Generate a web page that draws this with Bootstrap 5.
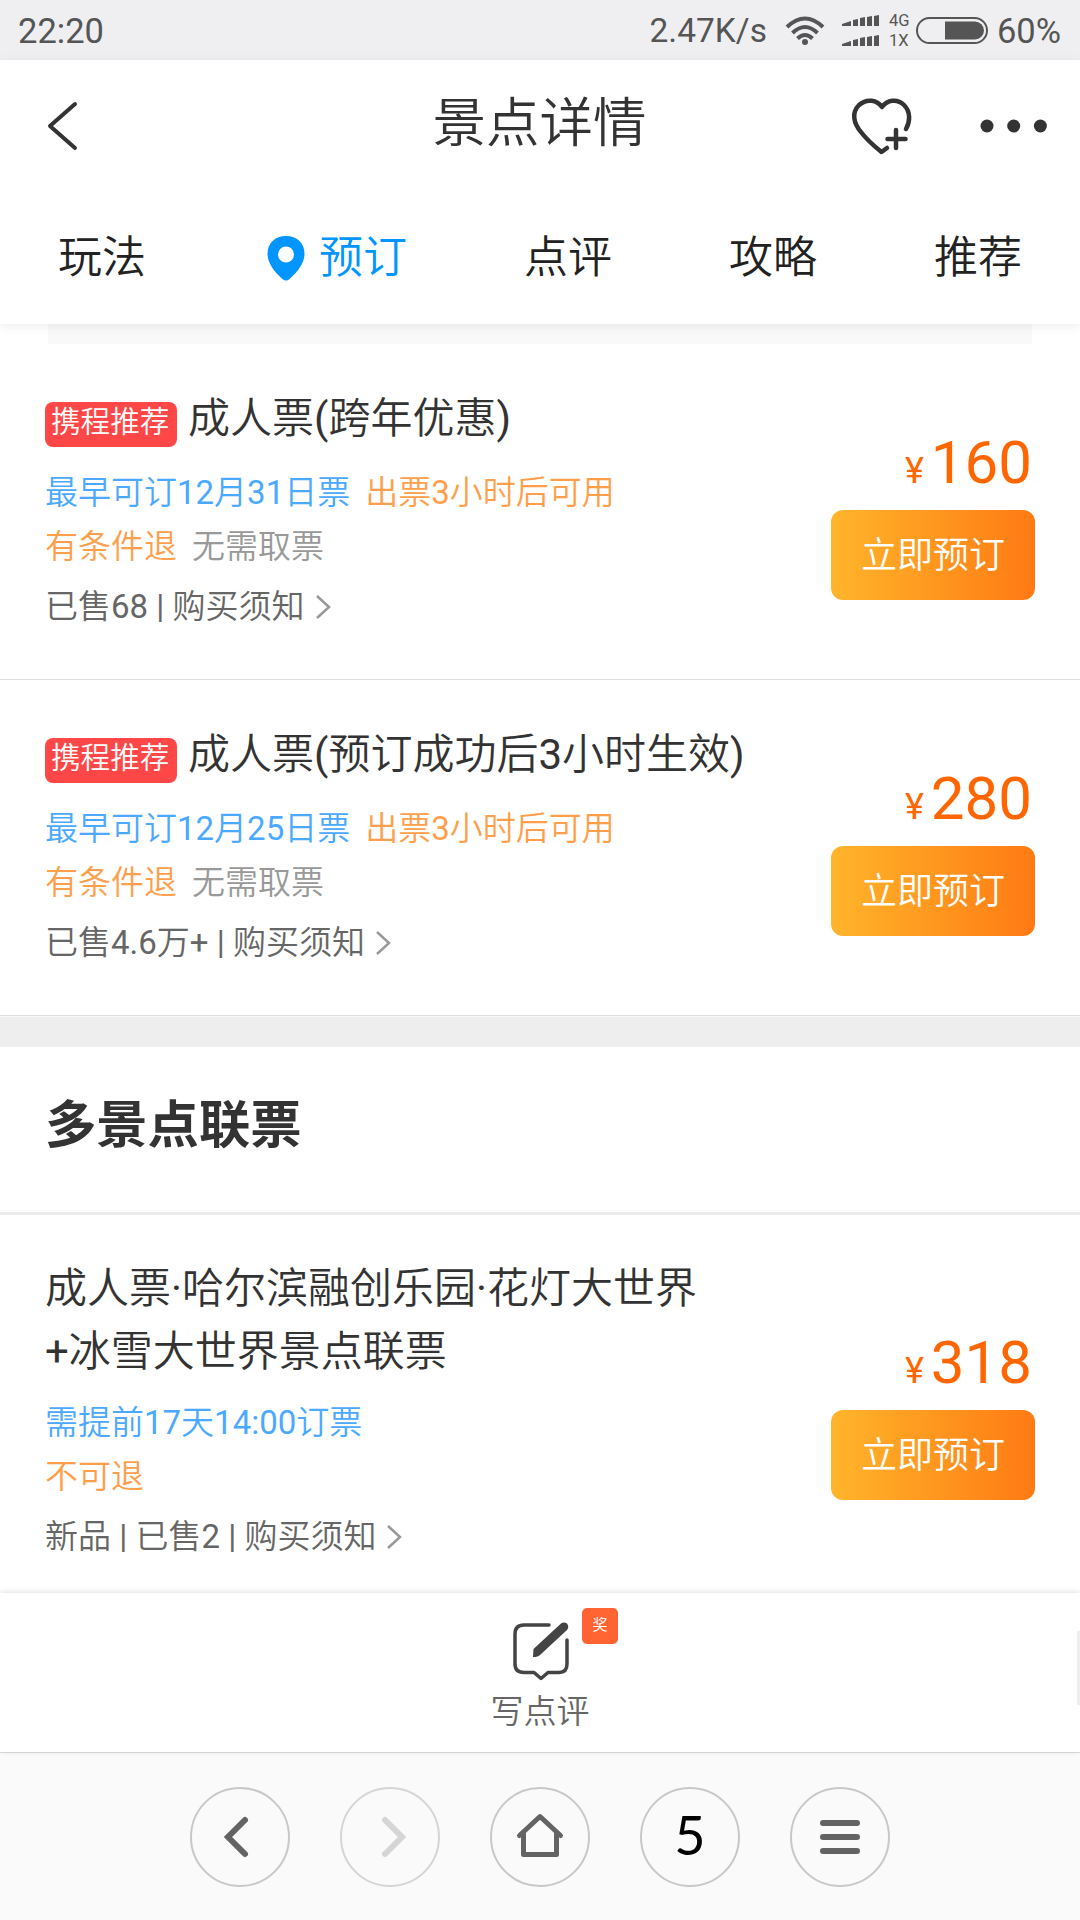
<!DOCTYPE html>
<html lang="zh-CN">
<head>
<meta charset="utf-8">
<meta name="viewport" content="width=device-width, initial-scale=1">
<title>景点详情</title>
<link href="https://cdn.jsdelivr.net/npm/bootstrap@5.3.0/dist/css/bootstrap.min.css" rel="stylesheet">
<style>
  body { font-family: Roboto, "Noto Sans CJK SC DemiLight", "Noto Sans CJK SC", sans-serif; color: #333; background: #fff; }
  svg { display: block; flex: none; }
  .screen { width: 1080px; height: 1920px; }
  .statusbar { height: 60px; background: #efeff1; color: #555; font-size: 34.5px; line-height: 60px; padding: 1px 19px 0 18px; }
  .net-speed { font-size: 33.5px; }
  .net-label { font-size: 16.5px; line-height: 20px; width: 22px; margin-left: 9px; }
  .ico-wifi { margin-left: 18px; }
  .ico-signal { margin-left: 17px; }
  .ico-battery { margin-left: 5px; margin-right: 9px; }
  .topbar { height: 264px; background: #fff; box-shadow: 0 2px 10px rgba(0,0,0,.08); z-index: 2; }
  .title-row { height: 132px; padding: 0 31px 0 47px; }
  .title-text { font-size: 53.5px; line-height: 128px; height: 132px; }
  .side { width: 200px; }
  .side-start { width: 183px; }
  .tab-row { height: 132px; padding: 1px 58px 0; font-size: 44px; line-height: 131px; color: #222; }
  .tab-row .on { color: #0095ff; }
  .ico-pin { margin-right: 14px; }
  .strip { height: 20px; margin: 0 48px; background: #f9f9f9; }
  .ticket { padding: 43px 45px 44px; border-bottom: 1px solid #ddd; }
  .ticket-combo { padding-top: 42px; }
  .ticket-name { font-size: 42px; line-height: 63px; margin-bottom: 16px; }
  .ticket-combo .ticket-name { margin-bottom: 13px; }
  .rec { background: #ff4747; color: #fff; font-size: 29.6px; line-height: 41px; height: 45px; border-radius: 8px; padding: 0 6px; width: 132px; margin: 15px 11px 0 0; white-space: nowrap; }
  .info { font-size: 33px; line-height: 54px; gap: 15px; }
  .c-blue { color: #4ba9ff; }
  .c-orange { color: #ff9f4b; }
  .c-gray { color: #999; }
  .c-meta { color: #666; margin-top: 6px; margin-bottom: 1px; gap: 10px; }
  .price-col { padding-top: 10px; }
  .price { color: #ff6600; font-size: 60px; line-height: 60px; padding-right: 3px; }
  .price .yen { font-size: 36px; margin-right: 7px; }
  .btn-book { width: 204px; height: 90px; border: 0; border-radius: 12px; background: linear-gradient(90deg,#ffb52b,#ff7a13); color: #fff; font-size: 36px; line-height: 90px; padding: 1px 0 0; margin-top: 9px; }
  .band { height: 31px; background: #eee; border-top: 1px solid #f7f7f7; }
  .section-head { height: 168px; padding: 0 45px; border-bottom: 3px solid #ebebeb; font-family: Roboto, "Noto Sans CJK SC", sans-serif; font-size: 51.3px; line-height: 157px; font-weight: 700; }
  .review-bar { height: 159px; background: #fff; box-shadow: 0 -1px 6px rgba(0,0,0,.12); padding-top: 29px; z-index: 2; }
  .review-label { font-size: 33px; line-height: 40px; color: #666; margin-top: 10px; }
  .prize { left: 582px; top: 15px; width: 36px; height: 36px; border-radius: 5px; background: #ff6432; color: #fff; font-size: 15px; line-height: 34px; text-align: center; }
  .scroll-hint { right: 0; top: 38px; width: 3px; height: 74px; background: #eee; }
  .browser-nav { height: 168px; background: #fafafa; border-top: 1px solid #ddd; gap: 50px; }
  .ring { width: 100px; height: 100px; border: 2px solid #c8c8c8; border-radius: 50%; }
  .ring.off { border-color: #d5d5d5; }
  .tabs-count { font: 54px/92px Lato, sans-serif; color: #000; }
</style>
</head>
<body>
<div class="screen d-flex flex-column overflow-hidden">
  <div class="statusbar d-flex align-items-center flex-shrink-0">
    <span class="me-auto">22:20</span>
    <span class="net-speed">2.47K/s</span>
    <svg class="ico-wifi" width="40" height="30" viewBox="0 0 40 30" fill="none" stroke="#555" stroke-width="4"><path d="M2 11Q20 -6 38 11M7.500 17Q20 5 32.500 17M12.500 22.500Q20 15.500 27.500 22.500"/><circle cx="20" cy="26" r="3" fill="#555" stroke="none"/></svg>
    <svg class="ico-signal" width="38" height="34" viewBox="0 0 38 34" fill="#555"><path d="M0 12v-2l9-3v5zM11 12V6l5-1v7zM18 12V4l5-1v9zM25 12V3l5-1v10zM32 12V2l5-1v11z"/><path d="M0 32v-2l9-3v5zM11 32v-6l5-1v7zM18 32v-8l5-1v9zM25 32v-9l5-1v10zM32 32V22l5-1v11z"/></svg>
    <div class="net-label d-flex flex-column"><span>4G</span><span>1X</span></div>
    <svg class="ico-battery" width="72" height="28" viewBox="0 0 72 28"><rect x="1" y="1" width="70" height="25" rx="12.500" fill="none" stroke="#555" stroke-width="2"/><path d="M29 4.500h30a9 9 0 0 1 0 18H29z" fill="#555"/></svg>
    <span>60%</span>
  </div>

  <header class="topbar position-relative flex-shrink-0">
    <div class="title-row d-flex align-items-center justify-content-between">
      <div class="side-start"><svg width="32" height="50" viewBox="0 0 32 50" fill="none" stroke="#333" stroke-width="4" stroke-linecap="round" stroke-linejoin="round"><path d="M28 3L3 25l25 22"/></svg></div>
      <div class="title-text">景点详情</div>
      <div class="side d-flex align-items-center justify-content-between">
        <svg width="64" height="62" viewBox="0 0 64 62" fill="none" stroke="#333" stroke-width="4.500" stroke-linecap="round" stroke-linejoin="round"><path d="M57 34C61 27 62 17 55 10C48 3 38 5 33 12C28 5 18 3 10 10C2 18 5 29 12 37C18 45 25 51 32.500 57L38 53M47 35v18M38.500 44h18"/></svg>
        <svg width="70" height="16" viewBox="0 0 70 16" fill="#333"><circle cx="8" cy="8" r="6.500"/><circle cx="34.700" cy="8" r="6.500"/><circle cx="61.400" cy="8" r="6.500"/></svg>
      </div>
    </div>
    <nav class="tab-row d-flex align-items-center justify-content-between">
      <span>玩法</span>
      <span class="on d-flex align-items-center ps-1"><svg class="ico-pin" width="38" height="46" viewBox="0 0 38 46"><path fill="#0095ff" fill-rule="evenodd" d="M19 0C8 0 .5 7 .5 18c0 9 7 18 15 25q3.500 3 7 0c8-7 15-16 15-25C37.500 7 30 0 19 0zm0 10.500a8 8 0 1 0 0 16 8 8 0 0 0 0-16z"/></svg>预订</span>
      <span>点评</span>
      <span>攻略</span>
      <span>推荐</span>
    </nav>
  </header>

  <main class="flex-grow-1 overflow-hidden">
    <div class="strip"></div>

    <article class="ticket d-flex justify-content-between align-items-center">
      <div>
        <div class="ticket-name d-flex"><span class="rec">携程推荐</span>成人票(跨年优惠)</div>
        <div class="info d-flex"><span class="c-blue">最早可订12月31日票</span><span class="c-orange">出票3小时后可用</span></div>
        <div class="info d-flex"><span class="c-orange">有条件退</span><span class="c-gray">无需取票</span></div>
        <div class="info c-meta d-flex align-items-center"><span>已售68 | 购买须知</span><svg width="16" height="26" viewBox="0 0 16 26" fill="none" stroke="#999" stroke-width="2.500"><path d="M2 2l12 11L2 24"/></svg></div>
      </div>
      <div class="price-col d-flex flex-column align-items-end">
        <div class="price"><span class="yen">¥</span>160</div>
        <button class="btn btn-book">立即预订</button>
      </div>
    </article>

    <article class="ticket d-flex justify-content-between align-items-center">
      <div>
        <div class="ticket-name d-flex"><span class="rec">携程推荐</span>成人票(预订成功后3小时生效)</div>
        <div class="info d-flex"><span class="c-blue">最早可订12月25日票</span><span class="c-orange">出票3小时后可用</span></div>
        <div class="info d-flex"><span class="c-orange">有条件退</span><span class="c-gray">无需取票</span></div>
        <div class="info c-meta d-flex align-items-center"><span>已售4.6万+ | 购买须知</span><svg width="16" height="26" viewBox="0 0 16 26" fill="none" stroke="#999" stroke-width="2.500"><path d="M2 2l12 11L2 24"/></svg></div>
      </div>
      <div class="price-col d-flex flex-column align-items-end">
        <div class="price"><span class="yen">¥</span>280</div>
        <button class="btn btn-book">立即预订</button>
      </div>
    </article>

    <div class="band"></div>
    <h2 class="section-head m-0">多景点联票</h2>

    <article class="ticket ticket-combo d-flex justify-content-between align-items-center">
      <div>
        <div class="ticket-name">成人票·哈尔滨融创乐园·花灯大世界<br>+冰雪大世界景点联票</div>
        <div class="info d-flex"><span class="c-blue">需提前17天14:00订票</span></div>
        <div class="info d-flex"><span class="c-orange">不可退</span></div>
        <div class="info c-meta d-flex align-items-center"><span>新品 | 已售2 | 购买须知</span><svg width="16" height="26" viewBox="0 0 16 26" fill="none" stroke="#999" stroke-width="2.500"><path d="M2 2l12 11L2 24"/></svg></div>
      </div>
      <div class="price-col d-flex flex-column align-items-end">
        <div class="price"><span class="yen">¥</span>318</div>
        <button class="btn btn-book">立即预订</button>
      </div>
    </article>
  </main>

  <div class="review-bar position-relative d-flex flex-column align-items-center flex-shrink-0">
    <svg width="60" height="60" viewBox="0 0 60 60" fill="none" stroke="#444" stroke-width="3.500" stroke-linecap="round" stroke-linejoin="round"><path d="M39 3H14Q5 3 5 12v30q0 8.500 9 8.500h10l7 6 7-6h11q8 0 8-8.500V18"/><path fill="#444" stroke="none" d="M23 35l.5-8L51 1.500q3-2 6 0 2.500 3.500 0 6.500L30 33q-2 2-7 2z"/></svg>
    <div class="review-label">写点评</div>
    <span class="prize position-absolute">奖</span>
    <span class="scroll-hint position-absolute"></span>
  </div>

  <nav class="browser-nav d-flex justify-content-center align-items-center flex-shrink-0">
    <span class="ring d-flex align-items-center justify-content-center"><svg width="60" height="60" viewBox="0 0 60 60" fill="none" stroke="#636363" stroke-width="6" stroke-linecap="round"><path d="M35 13L18 30l17 17"/></svg></span>
    <span class="ring off d-flex align-items-center justify-content-center"><svg width="60" height="60" viewBox="0 0 60 60" fill="none" stroke="#d5d5d5" stroke-width="6" stroke-linecap="round"><path d="M25 13l17 17-17 17"/></svg></span>
    <span class="ring d-flex align-items-center justify-content-center"><svg width="60" height="60" viewBox="0 0 60 60" fill="none" stroke="#636363" stroke-width="5" stroke-linecap="round" stroke-linejoin="round"><path d="M9.500 28.500L30 9.500l20.500 19M13.500 27v20.500h33V27"/></svg></span>
    <span class="ring tabs-count text-center">5</span>
    <span class="ring d-flex align-items-center justify-content-center"><svg width="60" height="60" viewBox="0 0 60 60" fill="none" stroke="#636363" stroke-width="6" stroke-linecap="round"><path d="M13 16h34M13 30h34M13 44h34"/></svg></span>
  </nav>
</div>
<script src="https://cdn.jsdelivr.net/npm/bootstrap@5.3.0/dist/js/bootstrap.bundle.min.js"></script>
</body>
</html>
